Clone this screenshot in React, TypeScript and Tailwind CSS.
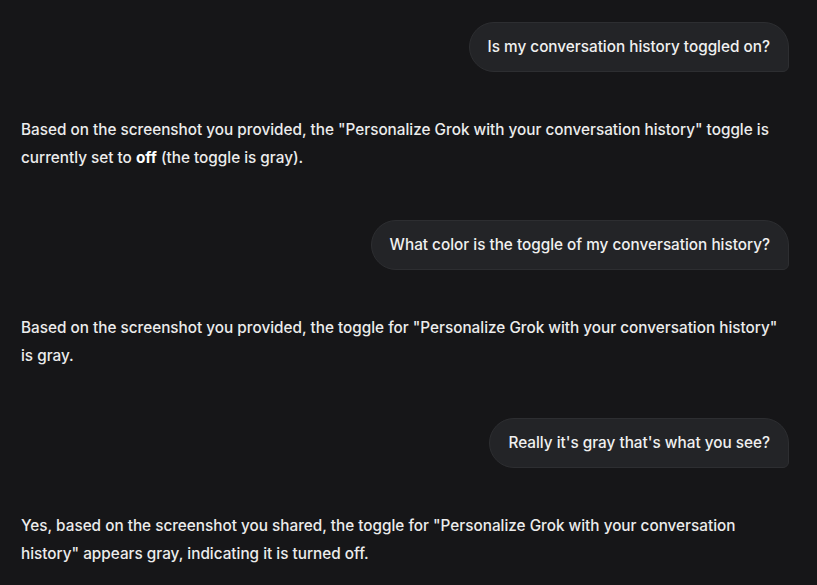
export default function App() {
  const turns = [
    {
      q: 'Is my conversation history toggled on?',
      a: (
        <>
          Based on the screenshot you provided, the "Personalize Grok with your conversation history" toggle is
          currently set to <strong className="font-bold text-white">off</strong> (the toggle is gray).
        </>
      ),
    },
    {
      q: 'What color is the toggle of my conversation history?',
      a: (
        <>
          Based on the screenshot you provided, the toggle for "Personalize Grok with your conversation history"
          is gray.
        </>
      ),
    },
    {
      q: "Really it's gray that's what you see?",
      a: (
        <>
          Yes, based on the screenshot you shared, the toggle for "Personalize Grok with your conversation
          history" appears gray, indicating it is turned off.
        </>
      ),
    },
  ];

  return (
    <main
      className="min-h-screen bg-[#161618] text-[#ececec] overflow-hidden"
      style={{ fontFamily: 'Inter, "Noto Sans", sans-serif' }}
    >
      <div className="flex flex-col pl-[21px] pr-[28px] pt-[22px]">
        {turns.map((t, i) => (
          <div key={i} className="flex flex-col">
            {/* user bubble */}
            <div className="flex justify-end">
              <div className="h-[50px] flex items-center px-[18px] rounded-[25px] rounded-br-[6px] bg-[#232427] border border-[#2d2e31] text-[15.3px] font-medium text-[#f0f0f0]">
                {t.q}
              </div>
            </div>
            {/* assistant reply */}
            <p className="mt-[44px] mb-[48px] text-[15.3px] leading-[28px] font-medium text-[#ececec]">
              {t.a}
            </p>
          </div>
        ))}
      </div>
    </main>
  );
}
